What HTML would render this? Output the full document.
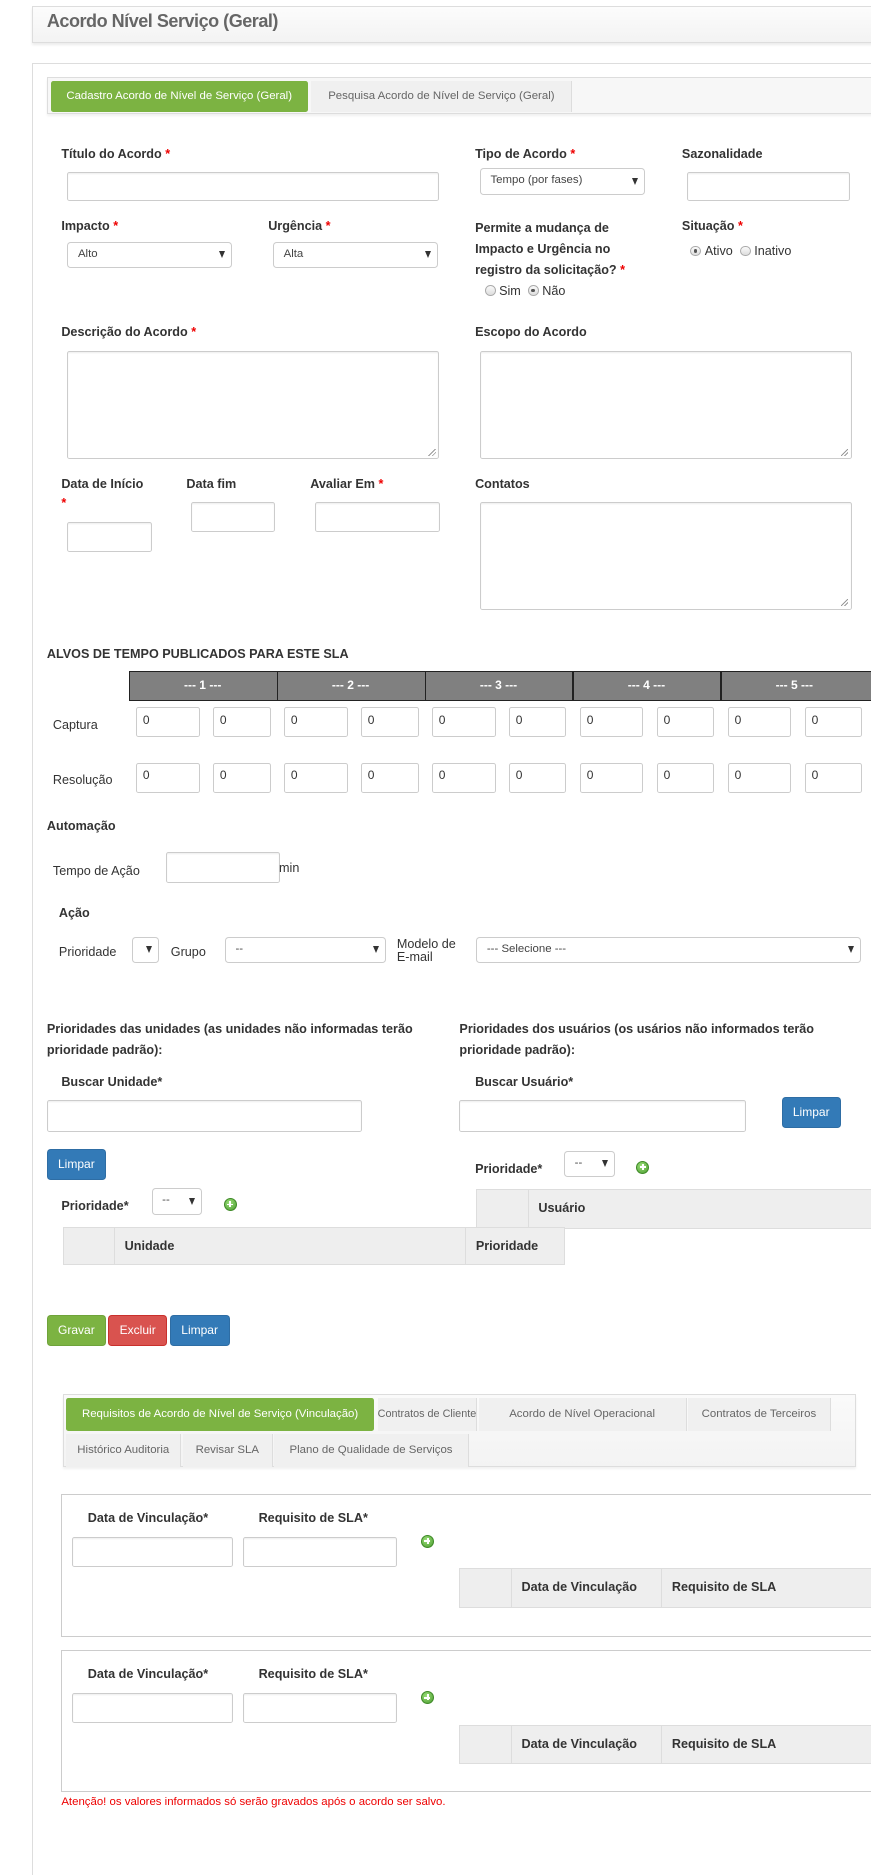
<!DOCTYPE html>
<html><head><meta charset="utf-8">
<style>
html,body{margin:0;padding:0;background:#fff;}
body{width:740px;height:1559px;zoom:1.2027;position:relative;overflow:hidden;font-family:"Liberation Sans",Arial,sans-serif;color:#333;}
#w{position:absolute;left:0;top:0;width:724px;height:1559px;overflow:hidden;}
.a{position:absolute;}
.l{position:absolute;font-size:10.5px;font-weight:bold;color:#333;white-space:nowrap;}
.t{position:absolute;font-size:10.5px;color:#333;white-space:nowrap;}
.r{color:#e00;}
.i{position:absolute;border:1px solid #ccc;border-radius:2px;background:#fff;box-sizing:border-box;box-shadow:inset 0 1px 1px rgba(0,0,0,.06);}
.s{position:absolute;border:1px solid #ccc;border-radius:3px;background:#fff;box-sizing:border-box;font-size:9.5px;color:#444;padding-left:8px;line-height:19px;}
.s:after{content:"";position:absolute;right:5px;top:7px;border-left:3px solid transparent;border-right:3px solid transparent;border-top:6px solid #333;}
.z{position:absolute;font-size:10px;color:#333;padding:4px 0 0 5px;box-sizing:border-box;border:1px solid #ccc;border-radius:2px;height:25px;}
.btn{position:absolute;color:#fff;font-size:10px;text-align:center;border-radius:3px;box-sizing:border-box;line-height:24px;}
.g{background:#7cb342;border:1px solid #6fa33a;}
.rd{background:#d9534f;border:1px solid #c9302c;}
.b{background:#337ab7;border:1px solid #2e6da4;}
.rad{display:inline-block;width:9px;height:9px;border-radius:50%;border:1px solid #aaa;background:linear-gradient(#fafafa,#ddd);vertical-align:-1px;position:relative;box-sizing:border-box;margin-right:3px;}
.rad.on:after{content:"";position:absolute;left:2px;top:2px;width:3px;height:3px;border-radius:50%;background:#555;}
.plus{position:absolute;width:11px;height:11px;border-radius:50%;background:radial-gradient(circle at 40% 35%,#9be07a,#4a9a2e);border:1px solid #3f8a28;box-sizing:border-box;}
.plus:before{content:"";position:absolute;left:2px;top:4px;width:5px;height:1.5px;background:#fff;}
.plus:after{content:"";position:absolute;left:4px;top:2px;width:1.5px;height:5px;background:#fff;}
.th{position:absolute;background:#eee;border:1px solid #ddd;box-sizing:border-box;}
.th div{position:absolute;top:0;bottom:0;border-left:1px solid #ddd;font-size:10.5px;font-weight:bold;color:#333;padding-left:8px;line-height:30px;}
.tab{position:absolute;font-size:9.5px;color:#666;text-align:center;line-height:26px;background:#f0f0f0;white-space:nowrap;overflow:hidden;}
.rz{position:absolute;right:2px;bottom:2px;width:6px;height:6px;background:linear-gradient(135deg,transparent 45%,#999 46%,#999 54%,transparent 55%,transparent 70%,#999 71%,#999 79%,transparent 80%);}
</style></head><body><div id="w">

<div class="a" style="left:27px;top:5px;width:700px;height:29px;background:linear-gradient(#fcfcfc,#f3f3f3);border:1px solid #ddd;box-shadow:0 2px 2px rgba(0,0,0,.08);"></div>
<div class="a" style="left:39px;top:9px;font-size:15px;font-weight:bold;color:#666;letter-spacing:-0.4px;">Acordo Nível Serviço (Geral)</div>

<div class="a" style="left:27px;top:52px;width:720px;height:1508px;border-left:1px solid #ddd;border-top:1px solid #ddd;border-bottom:1px solid #ddd;"></div>

<div class="a" style="left:39px;top:64px;width:700px;height:31px;border:1px solid #ddd;background:#f7f7f7;box-sizing:border-box;box-shadow:0 2px 2px rgba(0,0,0,.06);"></div>
<div class="tab" style="left:42px;top:67px;width:214px;background:#7cb342;color:#fff;border-radius:2px;">Cadastro Acordo de Nível de Serviço (Geral)</div>
<div class="tab" style="left:259px;top:67px;width:216px;border-right:1px solid #ddd;">Pesquisa Acordo de Nível de Serviço (Geral)</div>

<div class="l" style="left:51px;top:122px;">Título do Acordo <span class="r">*</span></div>
<div class="i" style="left:56px;top:143px;width:309px;height:24px;"></div>
<div class="l" style="left:395px;top:122px;">Tipo de Acordo <span class="r">*</span></div>
<div class="s" style="left:399px;top:140px;width:137px;height:22px;">Tempo (por fases)</div>
<div class="l" style="left:567px;top:122px;">Sazonalidade</div>
<div class="i" style="left:571px;top:143px;width:136px;height:24px;"></div>

<div class="l" style="left:51px;top:182px;">Impacto <span class="r">*</span></div>
<div class="s" style="left:56px;top:201px;width:137px;height:22px;">Alto</div>
<div class="l" style="left:223px;top:182px;">Urgência <span class="r">*</span></div>
<div class="s" style="left:227px;top:201px;width:137px;height:22px;">Alta</div>
<div class="l" style="left:395px;top:181px;line-height:17.5px;">Permite a mudança de<br>Impacto e Urgência no<br>registro da solicitação? <span class="r">*</span></div>
<div class="t" style="left:403px;top:236px;"><span class="rad"></span>Sim &nbsp;<span class="rad on"></span>Não</div>
<div class="l" style="left:567px;top:182px;">Situação <span class="r">*</span></div>
<div class="t" style="left:574px;top:203px;"><span class="rad on"></span>Ativo &nbsp;<span class="rad"></span>Inativo</div>

<div class="l" style="left:51px;top:270px;">Descrição do Acordo <span class="r">*</span></div>
<div class="i" style="left:56px;top:292px;width:309px;height:90px;"><div class="rz"></div></div>
<div class="l" style="left:395px;top:270px;">Escopo do Acordo</div>
<div class="i" style="left:399px;top:292px;width:309px;height:90px;"><div class="rz"></div></div>

<div class="l" style="left:51px;top:397px;">Data de Início</div>
<div class="l r" style="left:51px;top:412px;">*</div>
<div class="i" style="left:56px;top:434px;width:70px;height:25px;"></div>
<div class="l" style="left:155px;top:397px;">Data fim</div>
<div class="i" style="left:159px;top:417px;width:70px;height:25px;"></div>
<div class="l" style="left:258px;top:397px;">Avaliar Em <span class="r">*</span></div>
<div class="i" style="left:262px;top:417px;width:104px;height:25px;"></div>
<div class="l" style="left:395px;top:397px;">Contatos</div>
<div class="i" style="left:399px;top:417px;width:309px;height:90px;"><div class="rz"></div></div>

<div class="l" style="left:39px;top:538px;">ALVOS DE TEMPO PUBLICADOS PARA ESTE SLA</div>
<div class="a" style="left:107px;top:558px;width:633px;height:25px;background:#808080;border-top:1px solid #222;border-bottom:1px solid #222;box-sizing:border-box;"></div>
<div class="a" style="left:107px;top:558px;width:1px;height:25px;background:#222"></div>
<div class="a" style="left:230px;top:558px;width:1px;height:25px;background:#222"></div>
<div class="a" style="left:353px;top:558px;width:1px;height:25px;background:#222"></div>
<div class="a" style="left:476px;top:558px;width:1px;height:25px;background:#222"></div>
<div class="a" style="left:599px;top:558px;width:1px;height:25px;background:#222"></div>
<div class="a" style="left:107px;top:564px;width:123px;text-align:center;color:#fff;font-size:10px;font-weight:bold;">--- 1 ---</div>
<div class="a" style="left:230px;top:564px;width:123px;text-align:center;color:#fff;font-size:10px;font-weight:bold;">--- 2 ---</div>
<div class="a" style="left:353px;top:564px;width:123px;text-align:center;color:#fff;font-size:10px;font-weight:bold;">--- 3 ---</div>
<div class="a" style="left:476px;top:564px;width:123px;text-align:center;color:#fff;font-size:10px;font-weight:bold;">--- 4 ---</div>
<div class="a" style="left:599px;top:564px;width:123px;text-align:center;color:#fff;font-size:10px;font-weight:bold;">--- 5 ---</div>

<div class="t" style="left:44px;top:597px;">Captura</div>
<div class="t" style="left:44px;top:643px;">Resolução</div>

<div class="z" style="left:113px;top:588px;width:53px;">0</div><div class="z" style="left:177px;top:588px;width:48px;">0</div>
<div class="z" style="left:236px;top:588px;width:53px;">0</div><div class="z" style="left:300px;top:588px;width:48px;">0</div>
<div class="z" style="left:359px;top:588px;width:53px;">0</div><div class="z" style="left:423px;top:588px;width:48px;">0</div>
<div class="z" style="left:482px;top:588px;width:53px;">0</div><div class="z" style="left:546px;top:588px;width:48px;">0</div>
<div class="z" style="left:605px;top:588px;width:53px;">0</div><div class="z" style="left:669px;top:588px;width:48px;">0</div>

<div class="z" style="left:113px;top:634px;width:53px;">0</div><div class="z" style="left:177px;top:634px;width:48px;">0</div>
<div class="z" style="left:236px;top:634px;width:53px;">0</div><div class="z" style="left:300px;top:634px;width:48px;">0</div>
<div class="z" style="left:359px;top:634px;width:53px;">0</div><div class="z" style="left:423px;top:634px;width:48px;">0</div>
<div class="z" style="left:482px;top:634px;width:53px;">0</div><div class="z" style="left:546px;top:634px;width:48px;">0</div>
<div class="z" style="left:605px;top:634px;width:53px;">0</div><div class="z" style="left:669px;top:634px;width:48px;">0</div>

<div class="l" style="left:39px;top:681px;">Automação</div>
<div class="t" style="left:44px;top:718px;">Tempo de Ação</div>
<div class="i" style="left:138px;top:708px;width:95px;height:26px;"></div>
<div class="t" style="left:232px;top:716px;">min</div>
<div class="l" style="left:49px;top:753px;">Ação</div>
<div class="t" style="left:49px;top:786px;">Prioridade</div>
<div class="s" style="left:110px;top:779px;width:22px;height:22px;"></div>
<div class="t" style="left:142px;top:786px;">Grupo</div>
<div class="s" style="left:187px;top:779px;width:134px;height:22px;">--</div>
<div class="t" style="left:330px;top:780px;line-height:11px;">Modelo de<br>E-mail</div>
<div class="s" style="left:396px;top:779px;width:320px;height:22px;">--- Selecione ---</div>

<div class="l" style="left:39px;top:847px;line-height:18px;">Prioridades das unidades (as unidades não informadas terão<br>prioridade padrão):</div>
<div class="l" style="left:382px;top:847px;line-height:18px;">Prioridades dos usuários (os usários não informados terão<br>prioridade padrão):</div>
<div class="l" style="left:51px;top:894px;">Buscar Unidade*</div>
<div class="i" style="left:39px;top:915px;width:262px;height:26px;"></div>
<div class="l" style="left:395px;top:894px;">Buscar Usuário*</div>
<div class="i" style="left:382px;top:915px;width:238px;height:26px;"></div>
<div class="btn b" style="left:650px;top:912px;width:49px;height:26px;">Limpar</div>
<div class="btn b" style="left:39px;top:955px;width:49px;height:26px;">Limpar</div>

<div class="l" style="left:395px;top:966px;">Prioridade*</div>
<div class="s" style="left:469px;top:957px;width:42px;height:22px;">--</div>
<div class="plus" style="left:529px;top:965px;"></div>
<div class="th" style="left:396px;top:989px;width:344px;height:33px;"><div style="left:42px;right:0;">Usuário</div></div>

<div class="l" style="left:51px;top:997px;">Prioridade*</div>
<div class="s" style="left:126px;top:988px;width:42px;height:22px;">--</div>
<div class="plus" style="left:186px;top:996px;"></div>
<div class="th" style="left:52px;top:1020px;width:418px;height:32px;"><div style="left:42px;width:282px;">Unidade</div><div style="left:334px;right:0;">Prioridade</div></div>

<div class="btn g" style="left:39px;top:1093px;width:49px;height:26px;">Gravar</div>
<div class="btn rd" style="left:90px;top:1093px;width:49px;height:26px;">Excluir</div>
<div class="btn b" style="left:141px;top:1093px;width:50px;height:26px;">Limpar</div>

<div class="a" style="left:52px;top:1159px;width:660px;height:61px;border:1px solid #ddd;background:linear-gradient(#fafafa,#f3f3f3);box-sizing:border-box;box-shadow:0 2px 2px rgba(0,0,0,.06);"></div>
<div class="tab" style="left:55px;top:1162px;width:256px;height:28px;background:#7cb342;color:#fff;border-radius:2px;line-height:28px;">Requisitos de Acordo de Nível de Serviço (Vinculação)</div>
<div class="tab" style="left:314px;top:1162px;width:82px;border-right:1px solid #ddd;height:28px;line-height:28px;font-size:9px;">Contratos de Cliente</div>
<div class="tab" style="left:398px;top:1162px;width:172px;border-right:1px solid #ddd;height:28px;line-height:28px;">Acordo de Nível Operacional</div>
<div class="tab" style="left:572px;top:1162px;width:118px;border-right:1px solid #ddd;height:28px;line-height:28px;">Contratos de Terceiros</div>
<div class="tab" style="left:55px;top:1192px;width:95px;border-right:1px solid #ddd;height:28px;line-height:28px;">Histórico Auditoria</div>
<div class="tab" style="left:152px;top:1192px;width:74px;border-right:1px solid #ddd;height:28px;line-height:28px;">Revisar SLA</div>
<div class="tab" style="left:228px;top:1192px;width:161px;border-right:1px solid #ddd;height:28px;line-height:28px;">Plano de Qualidade de Serviços</div>

<div class="a" style="left:51px;top:1242px;width:700px;height:119px;border:1px solid #ccc;box-sizing:border-box;"></div>
<div class="l" style="left:73px;top:1256px;">Data de Vinculação*</div>
<div class="l" style="left:215px;top:1256px;">Requisito de SLA*</div>
<div class="i" style="left:60px;top:1278px;width:134px;height:25px;"></div>
<div class="i" style="left:202px;top:1278px;width:128px;height:25px;"></div>
<div class="plus" style="left:350px;top:1276px;"></div>
<div class="th" style="left:382px;top:1304px;width:360px;height:33px;"><div style="left:42px;width:116px;">Data de Vinculação</div><div style="left:167px;right:0;">Requisito de SLA</div></div>

<div class="a" style="left:51px;top:1372px;width:700px;height:118px;border:1px solid #ccc;box-sizing:border-box;"></div>
<div class="l" style="left:73px;top:1386px;">Data de Vinculação*</div>
<div class="l" style="left:215px;top:1386px;">Requisito de SLA*</div>
<div class="i" style="left:60px;top:1408px;width:134px;height:25px;"></div>
<div class="i" style="left:202px;top:1408px;width:128px;height:25px;"></div>
<div class="plus" style="left:350px;top:1406px;"></div>
<div class="th" style="left:382px;top:1434px;width:360px;height:33px;"><div style="left:42px;width:116px;">Data de Vinculação</div><div style="left:167px;right:0;">Requisito de SLA</div></div>

<div class="t" style="left:51px;top:1493px;font-size:9.5px;color:#e00;">Atenção! os valores informados só serão gravados após o acordo ser salvo.</div>

</div></body></html>
